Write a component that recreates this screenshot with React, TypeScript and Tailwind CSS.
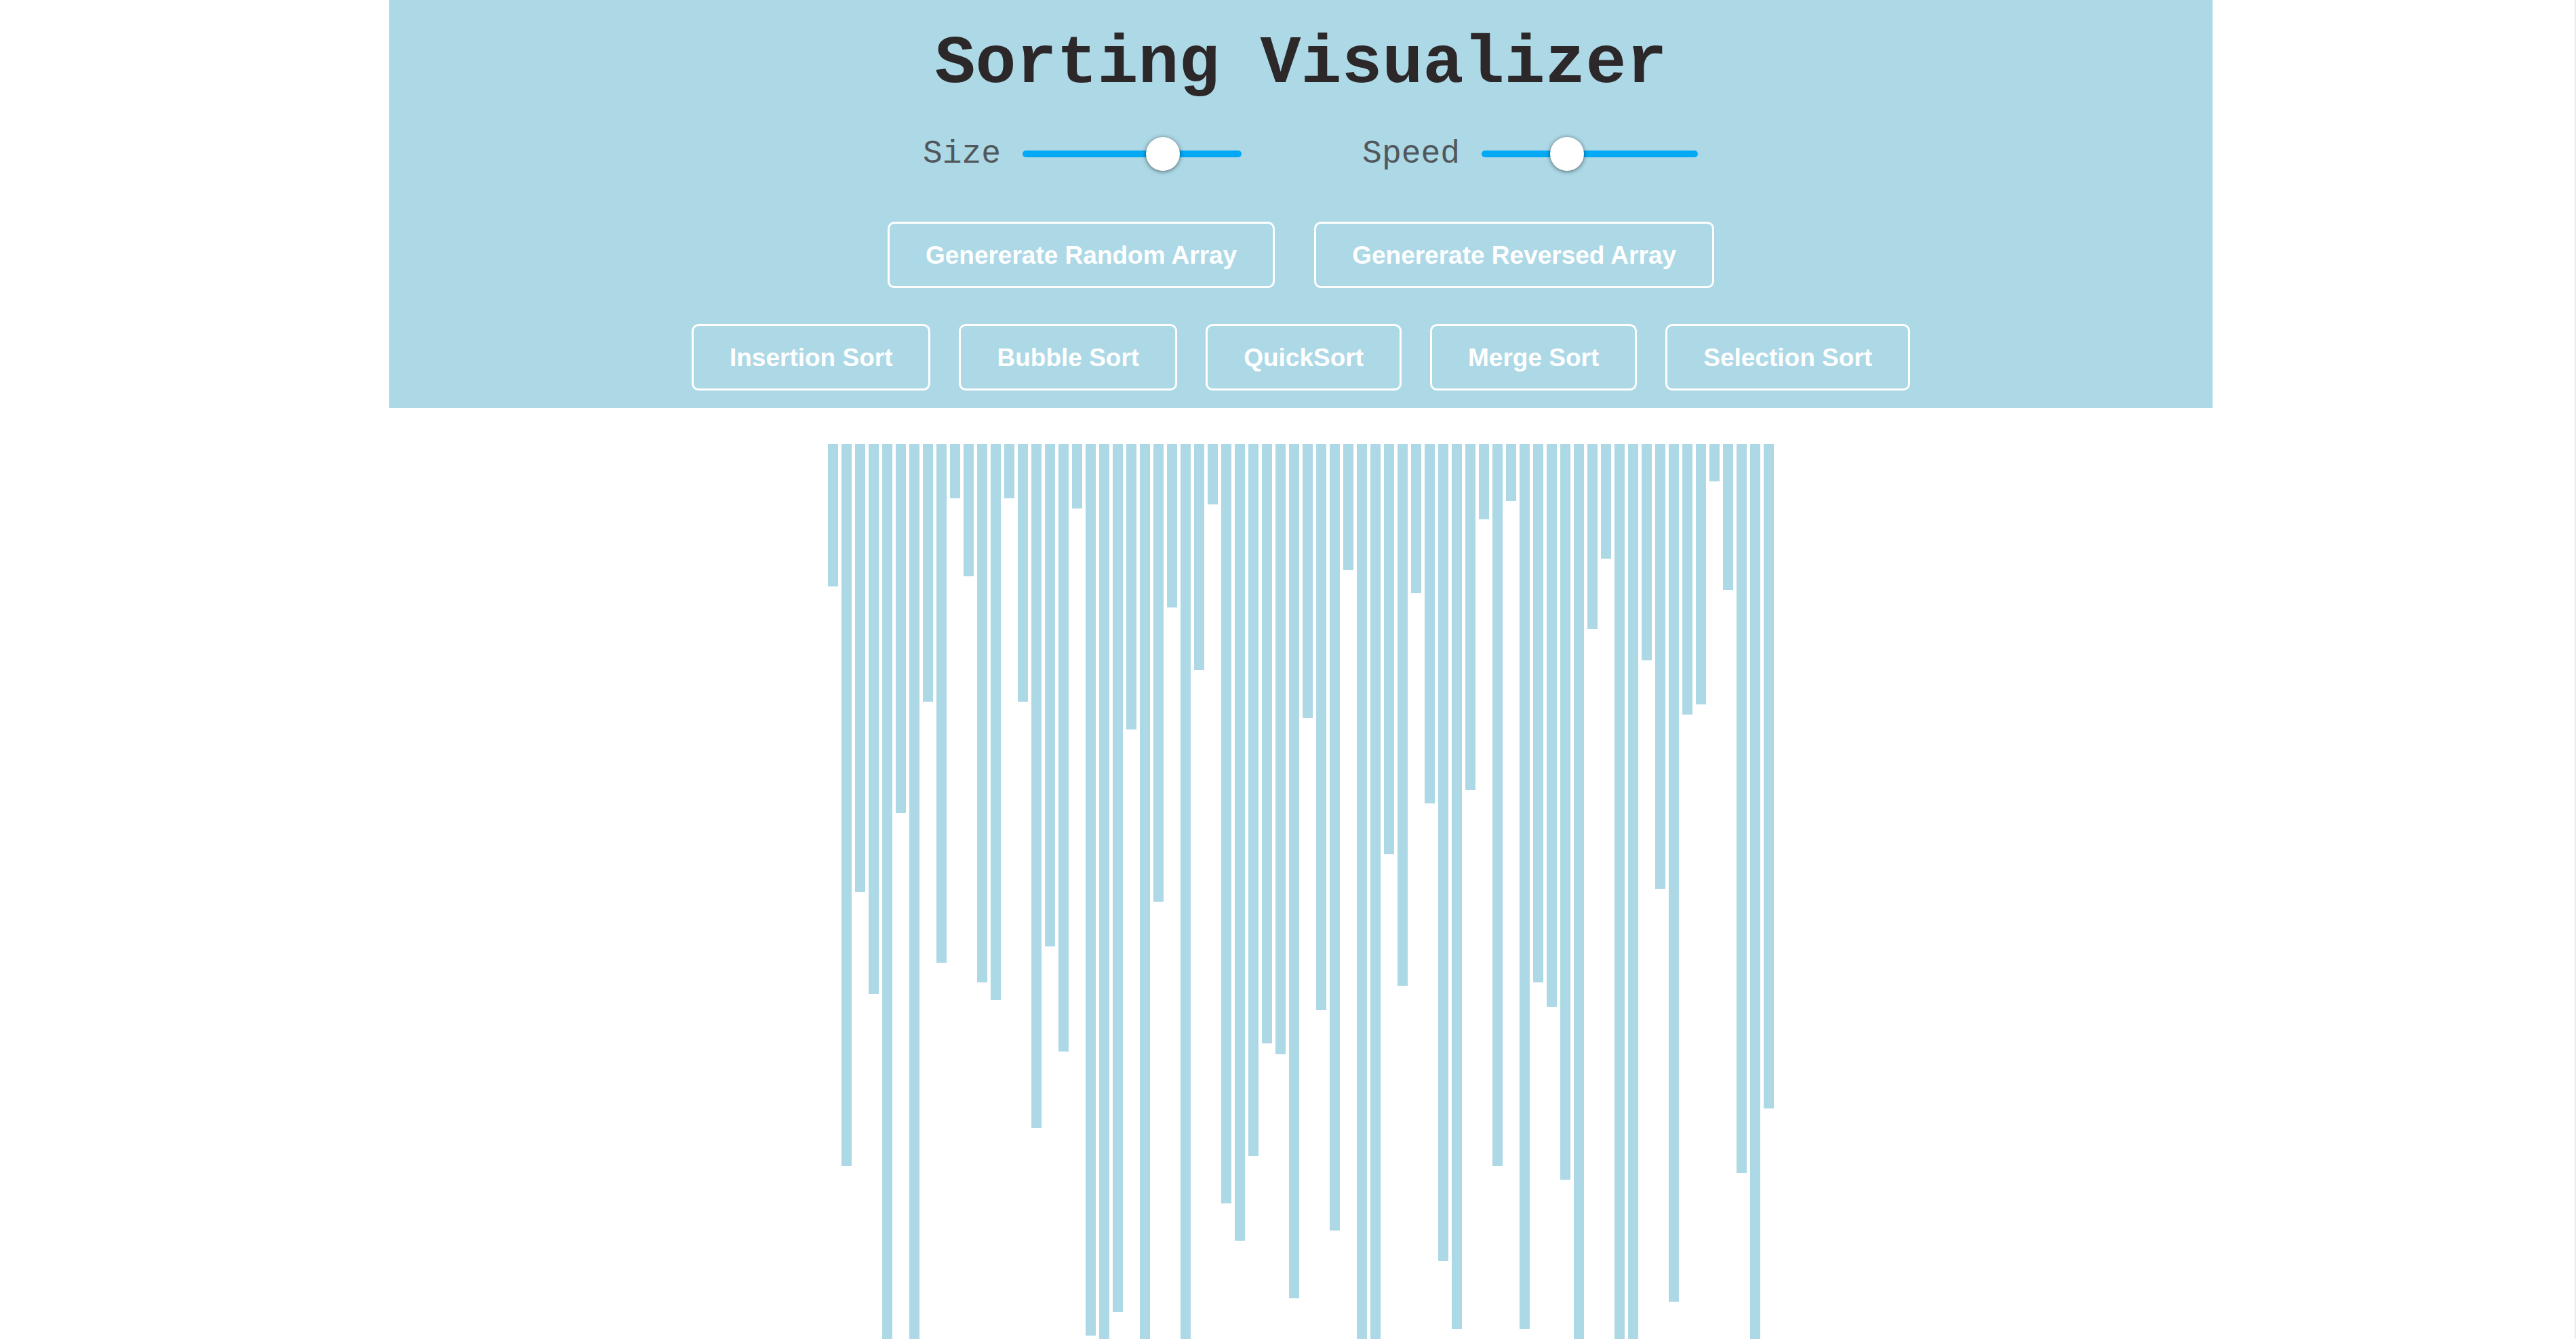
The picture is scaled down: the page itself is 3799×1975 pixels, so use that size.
import React from 'react';

const BAR_HEIGHTS = [
  210, 1065, 661, 811, 1400, 544, 1450, 380, 765, 80,
  195, 794, 820, 80, 380, 1009, 741, 896, 95, 1315,
  1380, 1280, 421, 1420, 675, 241, 1390, 333, 89, 1120,
  1175, 1050, 884, 900, 1260, 404, 835, 1160, 186, 1400,
  1440, 605, 799, 220, 530, 1205, 1305, 510, 111, 1065,
  84, 1305, 794, 830, 1085, 1400, 273, 169, 1400, 1420,
  319, 656, 1265, 399, 384, 55, 215, 1075, 1400, 980,
];

type SliderProps = {
  label: string;
  width: number;
  value: number; // 0..1
};

const Slider: React.FC<SliderProps> = ({ label, width, value }) => (
  <div className="flex items-center gap-[32px]">
    <span className="font-['Liberation_Mono',monospace] text-[48px] leading-[54px] text-[#52575c]">
      {label}
    </span>
    <div className="relative h-[50px] flex items-center" style={{ width }}>
      <div className="h-[10px] w-full rounded-full bg-[#03a9f4]" />
      <div
        className="absolute top-0 w-[50px] h-[50px] rounded-full bg-white shadow-[0_1px_6px_rgba(0,0,0,0.55)]"
        style={{ left: value * width - 25 }}
      />
    </div>
  </div>
);

const OutlineButton: React.FC<{ children: React.ReactNode }> = ({ children }) => (
  <button className="h-[98px] px-[53px] border-[3px] border-white rounded-[10px] bg-transparent text-white font-['Liberation_Sans',Arial,sans-serif] font-bold text-[37px] leading-none whitespace-nowrap">
    {children}
  </button>
);

export default function App() {
  return (
    <div className="w-full h-[1975px] overflow-hidden bg-white border-r-2 border-[#ebebeb]">
      <div className="ml-[574px] w-[2689px]">
        <header className="bg-[#add8e6] flex flex-col items-center pt-[38px] pb-[26px]">
          <h1 className="font-['Liberation_Mono',monospace] font-bold text-[100px] leading-[113px] text-[#2c2729]">
            Sorting Visualizer
          </h1>

          <div className="mt-[49px] h-[54px] w-full pl-[28px] flex items-center justify-center gap-[178px]">
            <Slider label="Size" width={323} value={0.641} />
            <Slider label="Speed" width={319} value={0.395} />
          </div>

          <div className="mt-[73px] flex gap-[58px]">
            <OutlineButton>Genererate Random Array</OutlineButton>
            <OutlineButton>Genererate Reversed Array</OutlineButton>
          </div>

          <div className="mt-[53px] flex gap-[42px]">
            <OutlineButton>Insertion Sort</OutlineButton>
            <OutlineButton>Bubble Sort</OutlineButton>
            <OutlineButton>QuickSort</OutlineButton>
            <OutlineButton>Merge Sort</OutlineButton>
            <OutlineButton>Selection Sort</OutlineButton>
          </div>
        </header>

        <div className="mt-[53px] flex items-start justify-center gap-[5px]">
          {BAR_HEIGHTS.map((h, i) => (
            <div key={i} className="w-[15px] shrink-0 bg-[#add8e6]" style={{ height: h }} />
          ))}
        </div>
      </div>
    </div>
  );
}
